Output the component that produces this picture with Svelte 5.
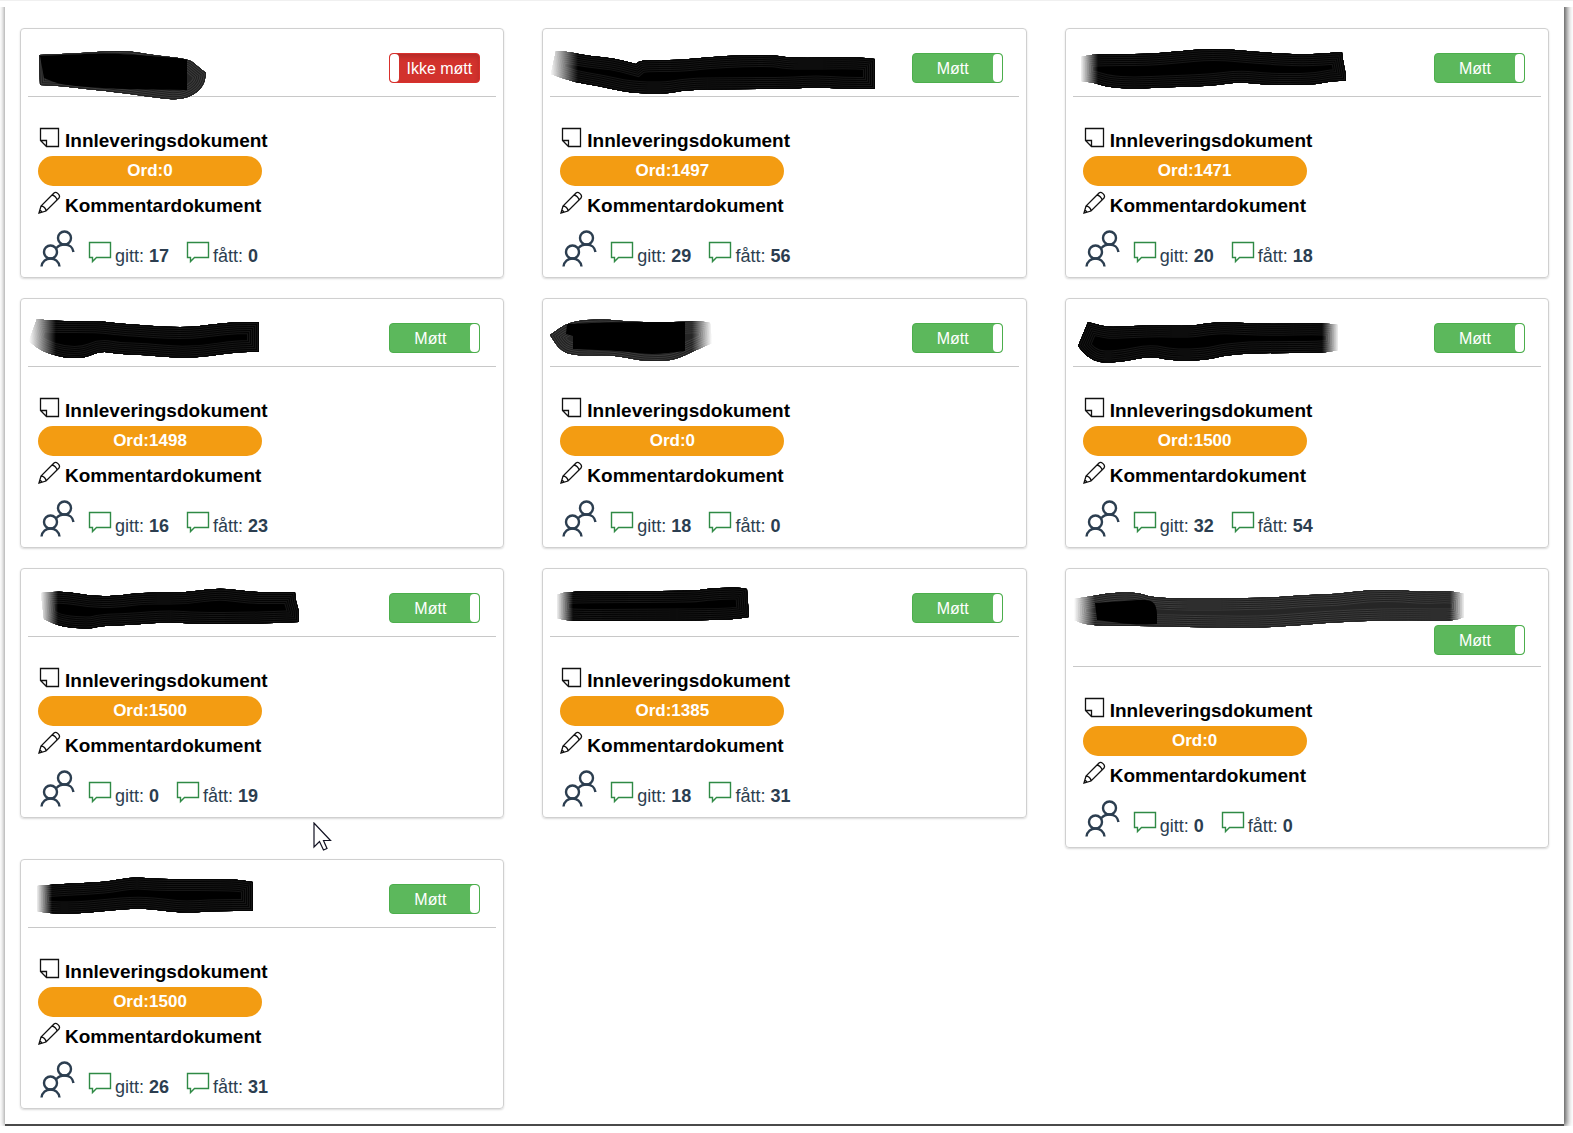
<script lang="ts">
    type Student = {
        met: boolean;
        words: number;
        given: number;
        received: number;
        mask: string;
        core?: string;
        width: number;
        fadeIn?: [number, number];
        fadeOut?: [number, number];
        grey?: boolean;
    };

    // mask: outline of the brush stroke that hides the name, measured from the card's corner
    // fadeIn, fadeOut: the stretches of x where the stroke appears and disappears
    let students: Student[] = $state([
        {
            met: false, words: 0, given: 17, received: 0, width: 168, grey: true,
            mask: "19,27 63,25 90,23 110,23 132,27 169,31 176,37 186,45 184,57 174,67 159,72 139,70 95,64 65,61 41,58 20,57",
            core: "20,28 63,26 90,25 132,28 167,31 167,62 95,61 41,57 24,50",
        },
        {
            met: true, words: 1497, given: 29, received: 56, width: 315, fadeIn: [8, 36],
            mask: "14,23 27,24 47,28 71,30 94,36 99,32 137,32 167,29 201,27 234,27 247,30 314,29 333,31 333,61 301,61 274,59 247,61 187,61 144,62 124,66 87,65 57,58 31,54 9,46",
        },
        {
            met: true, words: 1471, given: 20, received: 18, width: 263, fadeIn: [15, 33],
            mask: "16,29 30,26 83,26 117,23 138,21 158,21 195,24 238,27 277,24 278,32 281,47 281,53 267,53 248,57 202,57 175,54 145,58 105,59 68,61 42,59 30,55 16,53",
        },
        {
            met: true, words: 1498, given: 16, received: 23, width: 221, fadeIn: [9, 36],
            mask: "17,21 32,23 78,23 105,26 163,30 196,26 217,24 239,24 239,54 217,54 183,59 156,60 125,57 98,56 81,53 65,60 44,60 21,53 9,43",
        },
        {
            met: true, words: 0, given: 18, received: 0, width: 153, fadeOut: [150, 170], grey: true,
            mask: "8,37 28,23 61,21 91,24 134,24 158,23 168,25 170,45 154,52 131,63 101,63 81,59 64,57 38,58 19,54",
            core: "25,26 75,24 143,24 143,53 110,57 80,53 31,51 31,38 24,36",
        },
        {
            met: true, words: 1500, given: 32, received: 54, width: 255, fadeOut: [257, 274],
            mask: "23,24 38,28 48,29 88,27 127,28 142,25 162,24 198,26 258,25 273,27 273,52 258,55 195,55 162,57 142,62 108,63 85,58 58,64 35,65 22,59 13,48",
        },
        {
            met: true, words: 1500, given: 0, received: 19, width: 261, fadeIn: [20, 38],
            mask: "21,25 44,23 71,28 95,28 125,24 163,25 196,20 217,22 234,24 275,24 276,34 279,42 279,54 230,56 176,56 149,54 108,57 81,58 70,61 41,59 24,51",
        },
        {
            met: true, words: 1385, given: 18, received: 31, width: 189, fadeIn: [14, 31],
            mask: "15,27 27,23 154,23 161,21 194,19 205,21 206,35 207,49 187,52 84,53 27,53 15,50",
        },
        {
            met: true, words: 0, given: 0, received: 0, width: 381, fadeIn: [9, 30], fadeOut: [385, 400], grey: true,
            mask: "9,31 28,28 45,25 73,24 90,31 202,30 238,27 272,26 302,22 335,22 355,24 388,23 399,26 399,49 388,53 345,52 288,53 235,57 195,60 125,59 92,58 55,58 22,57 9,52",
            core: "30,35 60,33 84,31 92,38 92,56 70,57 32,52",
        },
        {
            met: true, words: 1500, given: 26, received: 31, width: 215, fadeIn: [16, 32],
            mask: "17,27 41,25 85,23 112,18 125,19 142,20 213,20 233,23 233,52 196,52 166,54 146,52 119,49 85,52 54,55 27,54 17,52",
        },
    ]);

    const streaks = [24, 20, 16, 12, 8, 4];

    // round the gentle bends of an outline and keep its sharp corners
    function smooth(outline: string) {
        const pts = outline.split(" ").map((p) => p.split(",").map(Number));
        const n = pts.length;
        const parts = pts.map(([x, y], i) => {
            const [ax, ay] = pts[(i + n - 1) % n];
            const [bx, by] = pts[(i + 1) % n];
            const turn = Math.abs(Math.atan2(by - y, bx - x) - Math.atan2(y - ay, x - ax));
            const sharp = Math.min(turn, 2 * Math.PI - turn) > 0.9;
            const start = `${(ax + x) / 2} ${(ay + y) / 2}`;
            const end = `${(bx + x) / 2} ${(by + y) / 2}`;
            return `${i ? "L" : "M"}${start}${sharp ? `L${x} ${y}L` : `Q${x} ${y} `}${end}`;
        });
        return parts.join("") + "Z";
    }
</script>

{#snippet comment()}
    <svg class="comment" width="24" height="27" viewBox="0 0 24 27" aria-hidden="true">
        <path d="M1.500 1.500H22.500V16.500H8.500L4.500 20.500V16.500H1.500Z" />
    </svg>
{/snippet}

<main>
    <div class="panel">
        <ul class="grid">
            {#each students as student, i}
                <li>
                    <article class="card">
                        <header>
                            <h4>
                                <svg
                                    class="mask"
                                    width={student.width}
                                    height="32"
                                    viewBox="18 25 {student.width} 32"
                                    role="img"
                                    aria-label="Skjult navn"
                                >
                                    <defs>
                                        <clipPath id="clip{i}"><path d={smooth(student.mask)} /></clipPath>
                                        {#each [student.fadeIn, student.fadeOut] as fade, end}
                                            {#if fade}
                                                <linearGradient
                                                    id="fade{i}-{end}"
                                                    gradientUnits="userSpaceOnUse"
                                                    x1={fade[end]}
                                                    x2={fade[1 - end]}
                                                    y1="0"
                                                    y2="0"
                                                >
                                                    <stop offset="0" stop-color="#000" />
                                                    <stop offset="1" stop-color="#fff" />
                                                </linearGradient>
                                                <mask
                                                    id="mask{i}-{end}"
                                                    maskUnits="userSpaceOnUse"
                                                    x="0"
                                                    y="0"
                                                    width="420"
                                                    height="90"
                                                >
                                                    <rect width="420" height="90" fill="url(#fade{i}-{end})" />
                                                </mask>
                                            {/if}
                                        {/each}
                                    </defs>
                                    <g mask={student.fadeIn ? `url(#mask${i}-0)` : undefined}>
                                        <g mask={student.fadeOut ? `url(#mask${i}-1)` : undefined}>
                                            <g clip-path="url(#clip{i})" class:grey={student.grey}>
                                                <path d={smooth(student.mask)} class="ink" />
                                                {#each streaks as width}
                                                    <path d={smooth(student.mask)} class="streak" stroke-width={width} />
                                                    <path d={smooth(student.mask)} class="gap" stroke-width={width - 2} />
                                                {/each}
                                                {#if student.core}
                                                    <path d={smooth(student.core)} class="core" />
                                                {/if}
                                            </g>
                                        </g>
                                    </g>
                                </svg>
                            </h4>
                            <label class="toggle" class:on={student.met}>
                                <input type="checkbox" bind:checked={student.met} />
                                <span class="text">{student.met ? "Møtt" : "Ikke møtt"}</span>
                                <span class="handle"></span>
                            </label>
                        </header>

                        <div class="body">
                            <a class="doc" href="#innlevering">
                                <svg width="23" height="23" viewBox="0 0 23 23" aria-hidden="true">
                                    <path d="M2.500 2.500H20.500V20.500H8.500L2.500 14.500ZM2.500 14.500H8.500V20.500" />
                                </svg>
                                Innleveringsdokument
                            </a>
                            <div class="words">Ord:{student.words}</div>
                            <a class="doc second" href="#kommentar">
                                <svg width="23" height="23" viewBox="0 0 23 23" aria-hidden="true">
                                    <path d="M1 22L3 15L16 2C18 0 23 4 21 7L8 20ZM3 15C5.500 15 8 17.500 8 20M14 4C16 4 19 7 19 9M1 22L4 21L2 19Z" />
                                </svg>
                                Kommentardokument
                            </a>
                            <div class="stats">
                                <svg class="people" width="36" height="38" viewBox="0 0 36 38" aria-hidden="true">
                                    <circle cx="25.500" cy="8" r="6.500" />
                                    <circle cx="11.500" cy="22" r="6.500" />
                                    <path d="M2.500 36.500C3 31.500 7 28.500 11.500 28.500S20 31.500 20.500 36.500M17.500 18C19.500 15.500 22.500 14.500 25.500 14.500C30.500 14.500 34 17.500 34.500 22" />
                                </svg>
                                <span class="stat">{@render comment()}<span>gitt: <b>{student.given}</b></span></span>
                                <span class="stat">{@render comment()}<span>fått: <b>{student.received}</b></span></span>
                            </div>
                        </div>
                    </article>
                </li>
            {/each}
        </ul>
    </div>
</main>

<svg class="cursor" width="19" height="30" viewBox="0 0 19 30" aria-hidden="true">
    <path d="M1 1V25L6.500 19.500L10.500 28L14 26.500L10.500 18.500H17.500Z" />
</svg>

<style>
    :global(body) {
        margin: 0;
        background: white;
        font-family: "Liberation Sans", Arial, sans-serif;
        color: #2c3e50;
    }

    main {
        padding: 0 9px 7px 5px;
        border-top: 1px solid #f0f0f0;
    }

    .panel {
        padding: 27px 15px 6px;
        background: white;
        border-bottom: 2px solid #4a4a4a;
        box-shadow:
            3px 0 6px rgba(0, 0, 0, 0.6),
            -1px 0 5px rgba(0, 0, 0, 0.3);
        clip-path: inset(6px -9px 0 -5px);
    }

    .grid {
        display: grid;
        grid-template-columns: repeat(3, 1fr);
        gap: 11px 38px;
        margin: 0;
        padding: 0;
        list-style: none;
    }

    li {
        min-height: 259px;
    }

    .card {
        padding: 0 7px 9px;
        border: 1px solid #d0d0d0;
        border-radius: 4px;
        box-shadow: 0 1px 2px rgba(0, 0, 0, 0.15);
    }

    header {
        display: flex;
        flex-wrap: wrap;
        align-items: flex-start;
        padding: 24px 16px 11px 10px;
        border-bottom: 1px solid #c8c8c8;
    }

    h4 {
        height: 32px;
        margin: 0;
    }

    .mask {
        display: block;
        overflow: visible;
    }

    .ink,
    .core {
        fill: #000;
    }

    .streak,
    .gap {
        fill: none;
        stroke: #161616;
    }

    .gap {
        stroke: #040404;
    }

    .grey .ink {
        fill: #262626;
    }

    .grey .streak {
        stroke: #3c3c3c;
    }

    .grey .gap {
        stroke: #202020;
    }

    .toggle {
        position: relative;
        display: flex;
        box-sizing: border-box;
        width: 91px;
        height: 30px;
        margin-left: auto;
        flex-direction: row-reverse;
        border: 1px solid #d9302c;
        border-radius: 4px;
        background: #d2322d;
        box-shadow: inset 0 3px 5px rgba(0, 0, 0, 0.15);
        color: white;
        font-size: 16px;
        line-height: 30px;
        cursor: pointer;
    }

    .toggle.on {
        flex-direction: row;
        border-color: #4cae4c;
        background: #5cb85c;
        box-shadow: none;
    }

    .toggle input {
        position: absolute;
        inset: 0;
        margin: 0;
        opacity: 0;
    }

    .text {
        flex: 1;
        text-align: center;
    }

    .handle {
        width: 9px;
        border-radius: 4px;
        background: white;
    }

    .body {
        padding: 29px 10px 0;
    }

    .doc {
        display: flex;
        gap: 4px;
        height: 30px;
        color: black;
        font-size: 19px;
        font-weight: bold;
        line-height: 30px;
        text-decoration: none;
    }

    .doc svg {
        fill: none;
        stroke: #111;
        stroke-width: 1.3;
    }

    .second {
        margin-top: 5px;
    }

    .words {
        width: 224px;
        height: 30px;
        border-radius: 15px;
        background: #f39c12;
        color: white;
        font-size: 17px;
        font-weight: bold;
        line-height: 30px;
        text-align: center;
    }

    .stats {
        display: flex;
        align-items: flex-end;
        gap: 17px;
        margin-top: 9px;
        padding-left: 1px;
        font-size: 18px;
        line-height: 24px;
    }

    .people {
        margin-right: -4px;
        fill: none;
        stroke: #2c3e50;
        stroke-width: 2.4;
    }

    .stat {
        display: flex;
        align-items: flex-end;
        gap: 3px;
    }

    .comment {
        fill: none;
        stroke: #2f8a45;
        stroke-width: 1.4;
    }

    .cursor {
        position: absolute;
        top: 822px;
        left: 313px;
        fill: white;
        stroke: #112;
        stroke-width: 1.2;
    }
</style>
